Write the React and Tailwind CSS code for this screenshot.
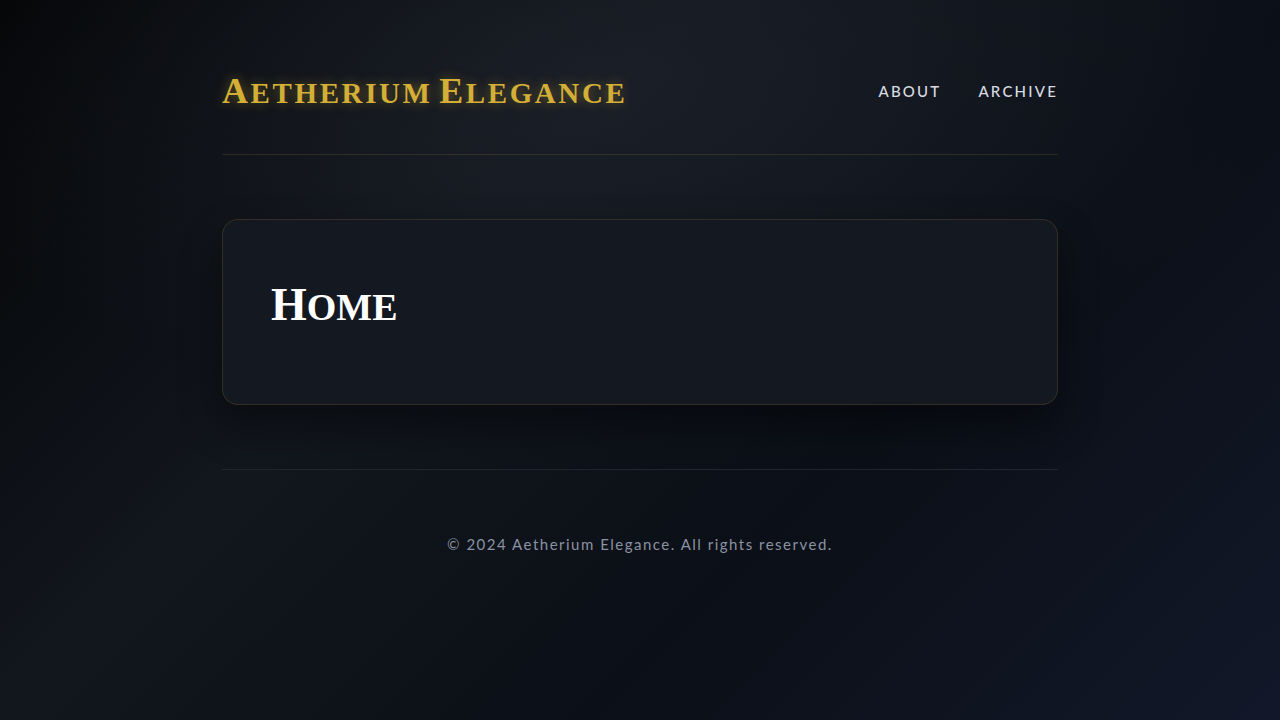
import React from "react";

const serif = { fontFamily: '"Liberation Serif", "DejaVu Serif", serif' };
const sans = { fontFamily: 'Lato, "Open Sans", "Liberation Sans", sans-serif' };

const navLinks = ["About", "Archive"];

// small-caps done by hand so the lower letters sit closer to cap height
const Caps = ({ text, big, small }) => (
  <>
    {text.split(" ").map((word, i) => (
      <React.Fragment key={i}>
        {i > 0 && " "}
        <span className={big}>{word[0]}</span>
        <span className={small}>{word.slice(1).toUpperCase()}</span>
      </React.Fragment>
    ))}
  </>
);

const App = () => {
  return (
    <div className="min-h-screen w-full bg-[radial-gradient(ellipse_55%_45%_at_45%_12%,rgba(34,38,48,0.55),transparent),linear-gradient(135deg,#030405_0%,#12161d_35%,#0b0f17_65%,#121829_100%)]">
      <div className="mx-auto w-[836px]">
        {/* Header */}
        <header className="flex h-[155px] items-center justify-between border-b border-[#d4af37]/15 pt-[28px]">
          <h1
            className="leading-none font-bold tracking-[2.6px] text-[#d4af37] [text-shadow:0_0_12px_rgba(212,175,55,0.45)]"
            style={serif}
          >
            <Caps text="Aetherium Elegance" big="text-[36px]" small="text-[29px]" />
          </h1>
          <nav className="flex items-center gap-[37px]">
            {navLinks.map((link) => (
              <a
                key={link}
                href="#"
                className="text-[15px] font-medium uppercase tracking-[2.2px] text-[#d8dbe2]"
                style={sans}
              >
                {link}
              </a>
            ))}
          </nav>
        </header>

        {/* Main */}
        <main className="py-16">
          <div className="h-[186px] rounded-2xl border border-[#d4af37]/15 bg-[#141821] px-12 pt-[62px] shadow-[0_20px_40px_rgba(0,0,0,0.45)]">
            <h2 className="leading-none font-bold text-white" style={serif}>
              <Caps text="Home" big="text-[46px]" small="text-[38px]" />
            </h2>
          </div>
        </main>

        {/* Footer */}
        <footer className="border-t border-[#1f2530] pt-[63px] text-center">
          <p className="text-[15px] tracking-[1.5px] text-[#8b93a2]" style={sans}>
            © 2024 Aetherium Elegance. All rights reserved.
          </p>
        </footer>
      </div>
    </div>
  );
};

export default App;
